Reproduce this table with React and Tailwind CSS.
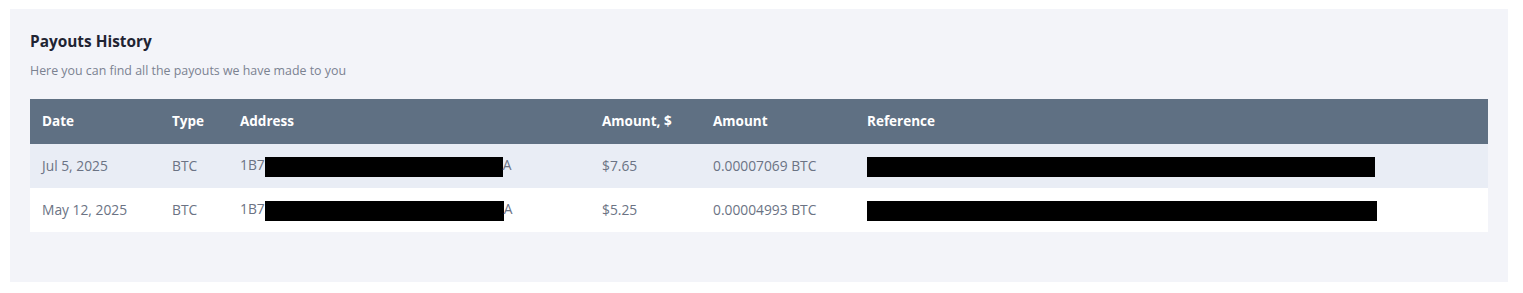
const rows = [
  { date: 'Jul 5, 2025', type: 'BTC', usd: '$7.65', amount: '0.00007069 BTC', addrW: 'w-[238px]', refW: 'w-[508px]' },
  { date: 'May 12, 2025', type: 'BTC', usd: '$5.25', amount: '0.00004993 BTC', addrW: 'w-[239px]', refW: 'w-[510px]' },
];

function Redacted({ className }) {
  return <span className={`inline-block h-[20px] bg-black align-middle ${className}`} />;
}

export default function App() {
  return (
    <div className="min-h-[293px] bg-white pl-[10px] pr-[15px] pt-[9px] pb-[11px] font-['Open_Sans',sans-serif]">
      <section className="h-[273px] bg-[#f3f4f9] px-5 pt-[23px]">
        <h2 className="text-[15.4px] font-bold leading-5 text-[#1f2433]">Payouts History</h2>
        <p className="mt-[9px] text-[12.4px] leading-5 text-[#7b8291]">Here you can find all the payouts we have made to you</p>

        <table className="mt-[18px] w-full table-fixed border-collapse text-left text-[13.8px]">
          <colgroup>
            <col className="w-[130px]" />
            <col className="w-[68px]" />
            <col className="w-[362px]" />
            <col className="w-[111px]" />
            <col className="w-[154px]" />
            <col />
          </colgroup>
          <thead>
            <tr className="h-[45px] bg-[#5f7083] text-[13.5px] text-white">
              <th className="px-3 font-bold">Date</th>
              <th className="px-3 font-bold">Type</th>
              <th className="px-3 font-bold">Address</th>
              <th className="px-3 font-bold">Amount, $</th>
              <th className="px-3 font-bold">Amount</th>
              <th className="px-3 font-bold">Reference</th>
            </tr>
          </thead>
          <tbody className="text-[#6b7384]">
            {rows.map((r, i) => (
              <tr key={r.date} className={`h-[44px] ${i === 0 ? 'bg-[#e9edf5]' : 'bg-white'}`}>
                <td className="px-3">{r.date}</td>
                <td className="px-3">{r.type}</td>
                <td className="whitespace-nowrap px-3">
                  1B7<Redacted className={r.addrW} />A
                </td>
                <td className="px-3">{r.usd}</td>
                <td className="px-3">{r.amount}</td>
                <td className="px-3">
                  <Redacted className={r.refW} />
                </td>
              </tr>
            ))}
          </tbody>
        </table>
      </section>
    </div>
  );
}
